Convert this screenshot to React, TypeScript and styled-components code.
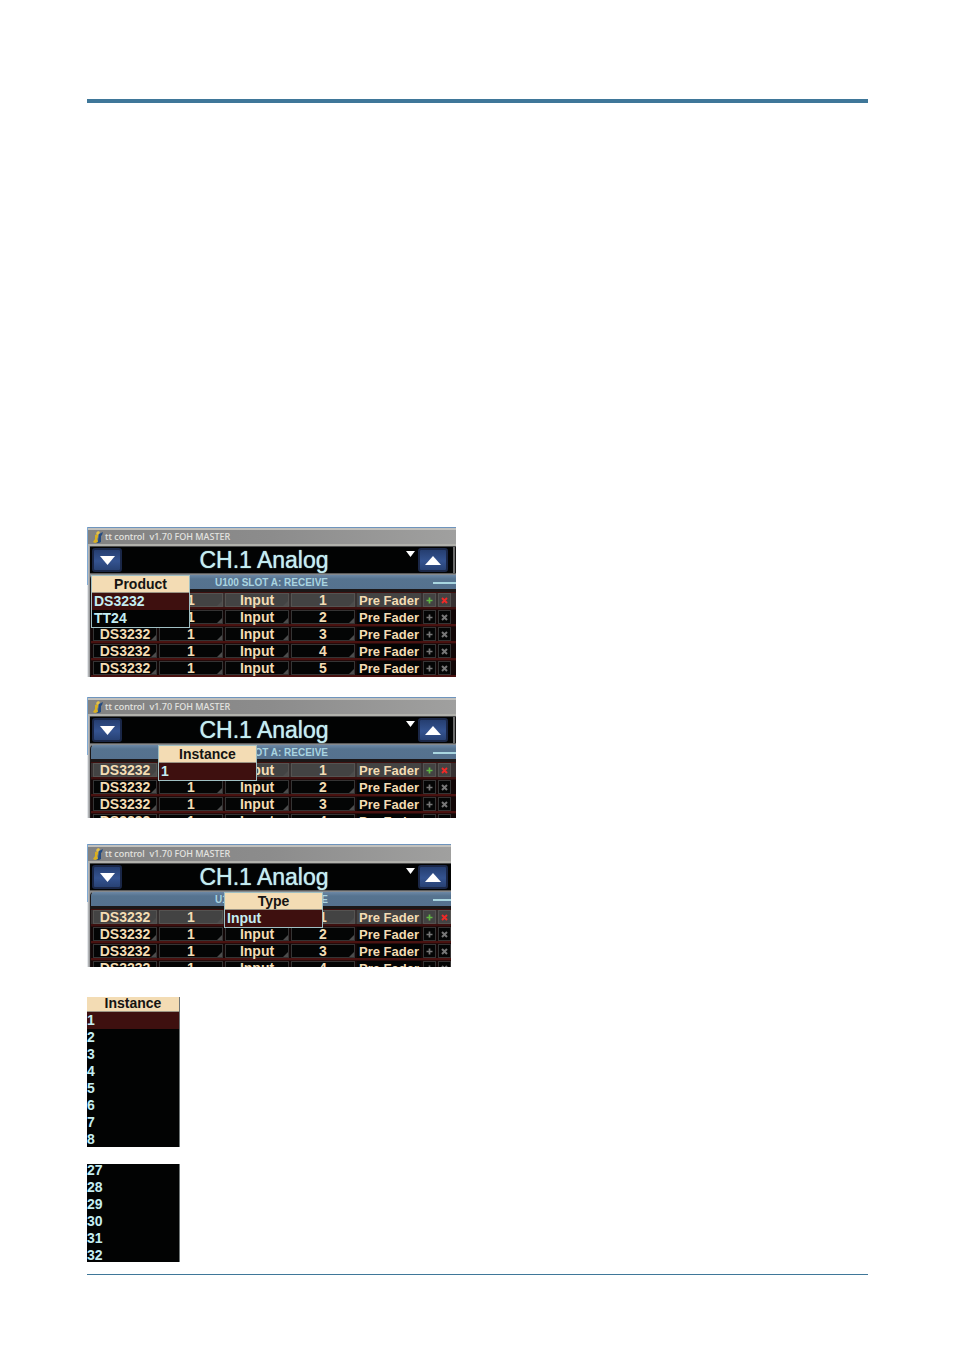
import React from "react";
import styled, { createGlobalStyle } from "styled-components";

const GlobalStyle = createGlobalStyle`
  *, *::before, *::after { box-sizing: border-box; }
  body { margin: 0; background: #ffffff; font-family: "Liberation Sans", Arial, sans-serif; }
  button { font: inherit; color: inherit; padding: 0; margin: 0; border: 0; background: none; }
`;

const cream = "#f3dcb4";
const ice = "#c4edf2";
const maroon = "#3e100f";

const Page = styled.div`
  padding: 99px 86px 75px 87px;
`;

const TopRule = styled.hr`
  height: 4px;
  margin: 0;
  border: 0;
  background: #3f7799;
`;

const BottomRule = styled.hr`
  height: 1px;
  margin: 12px 0 0;
  border: 0;
  background: #3f7799;
`;

const Figures = styled.main`
  padding-top: 424px;
`;

const Shot = styled.section<{ $width: number; $height: number; $after: number }>`
  position: relative;
  width: ${(p) => p.$width}px;
  max-width: 100%;
  height: ${(p) => p.$height}px;
  margin-bottom: ${(p) => p.$after}px;
  padding-left: 3px;
  overflow: hidden;
  background: linear-gradient(to right, transparent 1px, #c2c4c6 1px, #8a8c8e 3px),
    linear-gradient(#7fa9d3 58px, #e4e7ea 58px);
`;

const TitleBar = styled.header`
  display: flex;
  align-items: center;
  gap: 2px;
  height: 19px;
  margin-left: -2px;
  padding: 1px 0 0 5px;
  border-top: 1px solid #6e94bd;
  border-bottom: 2px solid #b1b1ac;
  box-shadow: inset 0 2px #c2c1bd;
  background: linear-gradient(to right, #828282, #8c8c8c 50%, #a0a09f);
  color: #e4e4e0;
  font: 500 9px/14px "Noto Sans", "Open Sans", sans-serif;
  white-space: pre;
`;

const ChannelBar = styled.div`
  display: grid;
  grid-template-columns: 30px 284px 12px 30px 4px 1fr;
  align-items: center;
  width: 367px;
  height: 28px;
  padding: 0 0 1px 2px;
  border-top: 1px solid #4b4b4b;
  border-bottom: 1px solid #5c5c5c;
  background: #020303;
`;

const ChannelName = styled.h2`
  margin: 0;
  color: ${ice};
  font-size: 23px;
  line-height: 25px;
  font-weight: 400;
  text-align: center;
  text-shadow: 0 0 1px ${ice};
`;

const StepButton = styled.button`
  display: flex;
  align-items: center;
  justify-content: center;
  height: 24px;
  border: 2px solid #1a2747;
  border-radius: 3px;
  background: linear-gradient(#253e70, #345390 55%, #284274);
`;

const MenuButton = styled.button`
  display: flex;
  align-items: flex-start;
  height: 22px;
  padding-top: 2px;
`;

const NextStrip = styled.span`
  height: 26px;
  margin-left: 1px;
  border-left: 2px solid #6c6c6c;
  background: linear-gradient(to right, #151515 2px, #5c5c5c 2px, #5c5c5c 3px, #080808 3px);
`;

const SlotBar = styled.div`
  position: relative;
  width: 366px;
  height: 18px;
  border: solid #1b1717;
  border-width: 1px 0 3px 1px;
  border-top-color: #85898d;
  border-radius: 5px 0 0 0;
  background: linear-gradient(#6c88a6, #56738f 4px, #55718e);
  color: #aad5e1;
  font-size: 10px;
  line-height: 16px;
  font-weight: 700;
  text-align: center;
  padding-right: 4px;
`;

const SlotLine = styled.span`
  position: absolute;
  top: 7px;
  left: 342px;
  right: 0;
  height: 2px;
  background: #a9d6e0;
`;

const Grid = styled.table`
  display: block;
  border-left: 1px solid #1a1111;
  background: ${maroon};
  font-size: 14px;
  line-height: 14px;
  font-weight: 700;
  color: ${cream};
`;

const Rows = styled.tbody`
  display: block;
`;

const Row = styled.tr<{ $active?: boolean }>`
  display: grid;
  grid-template-columns: repeat(5, 64px) 13px 13px 1fr;
  gap: 2px;
  width: 370px;
  height: 17px;
  padding: 1px 0 2px 2px;
  background: ${(p) => (p.$active ? "linear-gradient(#3e100f 1px, #373131 1px, #373131 15px, #3e100f 15px)" : "linear-gradient(#250a0a 1px, #120707 1px, #120707 15px, #4a1210 15px)")};
  --cell: ${(p) => (p.$active ? "#434343" : "#040505")};
  --line: ${(p) => (p.$active ? "#555351" : "#353434")};
`;

const Cell = styled.td`
  display: block;
  padding: 0;
  height: 14px;
`;

const Field = styled.button`
  display: block;
  width: 100%;
  height: 14px;
  border: 1px solid var(--line);
  background: linear-gradient(315deg, #4c4c4c 3px, var(--cell) 4px);
  line-height: 13px;
  text-align: center;
`;

const FaderButton = styled.button`
  display: block;
  width: 100%;
  height: 14px;
  background: var(--cell);
  font-size: 13px;
  line-height: 16px;
  white-space: nowrap;
`;

const MarkButton = styled.button<{ $tone: string }>`
  display: flex;
  align-items: center;
  justify-content: center;
  width: 13px;
  height: 14px;
  border: 1px solid var(--line);
  background: var(--cell);
  color: ${(p) => p.$tone};
`;

const Popup = styled.div<{ $left: number }>`
  position: absolute;
  top: 48px;
  left: ${(p) => p.$left}px;
  width: 99px;
  border: 1px solid #9fbfc3;
  background: #020303;
`;

const ListTitle = styled.h3`
  margin: 0;
  height: 17px;
  border-bottom: 1px solid #9b9484;
  background: ${cream};
  color: #161412;
  font-size: 14px;
  line-height: 17px;
  font-weight: 700;
  text-align: center;
`;

const Options = styled.ul`
  margin: 0;
  padding: 0;
  list-style: none;
`;

const Option = styled.button<{ $selected: boolean }>`
  display: block;
  width: 100%;
  height: 17px;
  padding-left: 2px;
  background: ${(p) => (p.$selected ? maroon : "#020303")};
  color: ${ice};
  font-size: 14px;
  line-height: 17px;
  font-weight: 700;
  text-align: left;
`;

const ListShot = styled.section<{ $height: number; $lift: number; $after: number }>`
  width: 93px;
  height: ${(p) => p.$height}px;
  margin-bottom: ${(p) => p.$after}px;
  overflow: hidden;
  border-right: 1px solid #6f7677;
  background: #020303;

  & > :first-child { margin-top: -${(p) => p.$lift}px; }
  ${Option} { padding-left: 0; }
`;

const Logo = () => (
  <svg width="10" height="14" viewBox="0 0 10 14" aria-hidden="true">
    <path d="M6 4 L10 2 L9 5 L8 6 L8 12 L6 13 L3 13 L5 11 Z" fill="#234a80" />
    <path d="M2 5 L5 4 L5 7 L4 9 L5 12 L2 13 L0 12 L2 9 Z" fill="#d9b020" />
    <path d="M3 3 L5 1 L7 2 L6 4 L4 5 Z" fill="#e4c14a" />
  </svg>
);

const Triangle = ({ up, width, height }: { up?: boolean; width: number; height: number }) => (
  <svg width={width} height={height} viewBox="0 0 16 8" preserveAspectRatio="none" aria-hidden="true">
    <path d={up ? "M8 0 L16 8 H0 Z" : "M0 0 H16 L8 8 Z"} fill="#ffffff" />
  </svg>
);

const Plus = () => (
  <svg width="7" height="7" viewBox="0 0 7 7" aria-hidden="true">
    <path d="M3.5 0.5 V6.5 M0.5 3.5 H6.5" stroke="currentColor" strokeWidth="1.7" />
  </svg>
);

const Cross = () => (
  <svg width="7" height="7" viewBox="0 0 7 7" aria-hidden="true">
    <path d="M1 1 L6 6 M6 1 L1 6" stroke="currentColor" strokeWidth="2" />
  </svg>
);

const OptionList = ({ items, selected }: { items: string[]; selected?: string }) => (
  <Options>
    {items.map((item) => (
      <li key={item}>
        <Option type="button" $selected={item === selected}>{item}</Option>
      </li>
    ))}
  </Options>
);

type RoutingProps = {
  width: number;
  height: number;
  after: number;
  rows: number;
  menu: { title: string; left: number; items: string[] };
};

const RoutingShot = ({ width, height, after, rows, menu }: RoutingProps) => (
  <Shot $width={width} $height={height} $after={after}>
    <TitleBar>
      <Logo />
      <span>{"tt control  v1.70 FOH MASTER"}</span>
    </TitleBar>
    <ChannelBar>
      <StepButton type="button" aria-label="Previous channel"><Triangle width={15} height={9} /></StepButton>
      <ChannelName>CH.1 Analog</ChannelName>
      <MenuButton type="button" aria-label="Channel menu"><Triangle width={9} height={6} /></MenuButton>
      <StepButton type="button" aria-label="Next channel"><Triangle up width={16} height={9} /></StepButton>
      <span />
      <NextStrip />
    </ChannelBar>
    <SlotBar>
      U100 SLOT A: RECEIVE
      <SlotLine />
    </SlotBar>
    <Grid>
      <Rows>
        {Array.from({ length: rows }, (_, i) => (
          <Row key={i} $active={i === 0}>
            {["DS3232", "1", "Input", String(i + 1)].map((value, c) => (
              <Cell key={c}><Field type="button">{value}</Field></Cell>
            ))}
            <Cell><FaderButton type="button">Pre Fader</FaderButton></Cell>
            <Cell><MarkButton type="button" aria-label="Add" $tone={i === 0 ? "#62b844" : "#777777"}><Plus /></MarkButton></Cell>
            <Cell><MarkButton type="button" aria-label="Remove" $tone={i === 0 ? "#ee2a28" : "#777777"}><Cross /></MarkButton></Cell>
          </Row>
        ))}
      </Rows>
    </Grid>
    <Popup $left={menu.left}>
      <ListTitle>{menu.title}</ListTitle>
      <OptionList items={menu.items} selected={menu.items[0]} />
    </Popup>
  </Shot>
);

export default function App() {
  return (
    <>
      <GlobalStyle />
      <Page>
        <TopRule />
        <Figures>
          <RoutingShot width={369} height={150} after={20} rows={5} menu={{ title: "Product", left: 4, items: ["DS3232", "TT24"] }} />
          <RoutingShot width={369} height={121} after={26} rows={4} menu={{ title: "Instance", left: 71, items: ["1"] }} />
          <RoutingShot width={364} height={123} after={30} rows={4} menu={{ title: "Type", left: 137, items: ["Input"] }} />
          <ListShot $height={150} $lift={2} $after={17}>
            <ListTitle>Instance</ListTitle>
            <OptionList items={["1", "2", "3", "4", "5", "6", "7", "8"]} selected="1" />
          </ListShot>
          <ListShot $height={98} $lift={2} $after={0}>
            <OptionList items={["27", "28", "29", "30", "31", "32"]} />
          </ListShot>
        </Figures>
        <BottomRule />
      </Page>
    </>
  );
}
